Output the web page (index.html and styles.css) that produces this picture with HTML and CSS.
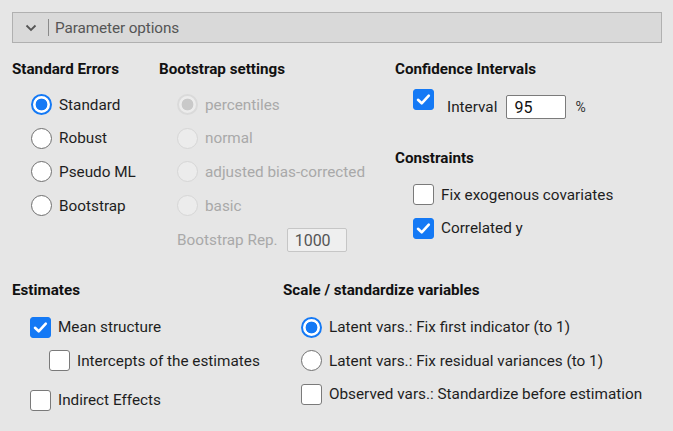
FILE: index.html
```html
<!DOCTYPE html>
<html>
<head>
<meta charset="utf-8">
<link rel="stylesheet" href="styles.css">
</head>
<body>
<div class="panel-header">
  <svg class="chev" width="12" height="8" viewBox="0 0 12 8"><path d="M1.5 1.5 L6 6 L10.5 1.5" fill="none" stroke="#555" stroke-width="1.8"/></svg>
  <span class="sep"></span>
  <span class="title">Parameter options</span>
</div>

<div class="section top">
  <div class="col col-se">
    <div class="heading">Standard Errors</div>
    <div class="opts">
      <div class="row"><span class="radio on"></span><span>Standard</span></div>
      <div class="row"><span class="radio"></span><span>Robust</span></div>
      <div class="row"><span class="radio"></span><span>Pseudo ML</span></div>
      <div class="row"><span class="radio"></span><span>Bootstrap</span></div>
    </div>
  </div>
  <div class="col col-bs">
    <div class="heading">Bootstrap settings</div>
    <div class="opts disabled">
      <div class="row"><span class="radio dis on"></span><span>percentiles</span></div>
      <div class="row"><span class="radio dis"></span><span>normal</span></div>
      <div class="row"><span class="radio dis"></span><span>adjusted bias-corrected</span></div>
      <div class="row"><span class="radio dis"></span><span>basic</span></div>
      <div class="rep-row"><span>Bootstrap Rep.</span><span class="field dis-field">1000</span></div>
    </div>
  </div>
  <div class="col col-ci">
    <div class="heading">Confidence Intervals</div>
    <div class="ci-row">
      <span class="check on"><svg width="21" height="21" viewBox="0 0 21 21"><path d="M5 10.8 L8.7 14.3 L15.8 6.6" fill="none" stroke="#fff" stroke-width="2.6" stroke-linecap="round" stroke-linejoin="round"/></svg></span>
      <div class="ci-inner"><span>Interval</span><span class="field">95</span><span class="pct">%</span></div>
    </div>
    <div class="heading h-constraints">Constraints</div>
    <div class="opts tight">
      <div class="row"><span class="check"></span><span>Fix exogenous covariates</span></div>
      <div class="row"><span class="check on"><svg width="21" height="21" viewBox="0 0 21 21"><path d="M5 10.8 L8.7 14.3 L15.8 6.6" fill="none" stroke="#fff" stroke-width="2.6" stroke-linecap="round" stroke-linejoin="round"/></svg></span><span>Correlated y</span></div>
    </div>
  </div>
</div>

<div class="section bottom">
  <div class="col col-est">
    <div class="heading">Estimates</div>
    <div class="opts tight">
      <div class="row"><span class="check on"><svg width="21" height="21" viewBox="0 0 21 21"><path d="M5 10.8 L8.7 14.3 L15.8 6.6" fill="none" stroke="#fff" stroke-width="2.6" stroke-linecap="round" stroke-linejoin="round"/></svg></span><span>Mean structure</span></div>
      <div class="row nested"><span class="check"></span><span>Intercepts of the estimates</span></div>
      <div class="row gap-top"><span class="check"></span><span>Indirect Effects</span></div>
    </div>
  </div>
  <div class="col col-scale">
    <div class="heading">Scale / standardize variables</div>
    <div class="opts tight">
      <div class="row"><span class="radio on"></span><span>Latent vars.: Fix first indicator (to 1)</span></div>
      <div class="row"><span class="radio"></span><span>Latent vars.: Fix residual variances (to 1)</span></div>
      <div class="row"><span class="check"></span><span>Observed vars.: Standardize before estimation</span></div>
    </div>
  </div>
</div>
</body>
</html>
```
FILE: styles.css
```css
html, body {
  margin: 0;
  padding: 0;
  background: #e6e6e6;
  font-family: Roboto, "Liberation Sans", sans-serif;
  color: #1e1e1e;
  width: 673px;
  height: 431px;
  overflow: hidden;
}

.panel-header {
  margin: 12px 11px 0 12px;
  height: 29px;
  border: 1px solid #b0b0b0;
  background: #d9d9d9;
  display: flex;
  align-items: center;
  box-sizing: content-box;
}
.chev {
  margin-left: 12px;
  margin-top: 1px;
}
.sep {
  width: 1px;
  height: 17px;
  background: #8a8a8a;
  margin-left: 11px;
}
.title {
  margin-left: 6px;
  font-size: 15.3px;
  color: #555;
  letter-spacing: -0.1px;
}

.section {
  display: flex;
  padding-left: 12px;
}
.top { margin-top: 16px; }
.bottom { margin-top: 28px; }

.heading {
  font-weight: bold;
  font-size: 15.2px;
  line-height: 20px;
  height: 20px;
  color: #111;
  white-space: nowrap;
}

.col-se { width: 147px; }
.col-bs { width: 236px; }
.col-est { width: 271px; }

.opts {
  margin-top: 9px;
  padding-left: 18px;
  font-size: 15.3px;
}
.opts.tight { margin-top: 10px; }
.col-se .opts { padding-left: 19px; }

.row {
  display: flex;
  align-items: center;
  height: 33.6px;
  gap: 7px;
  white-space: nowrap;
}
.row.nested { padding-left: 19px; }
.row.gap-top { margin-top: 6px; }

.disabled { color: #a9a9a9; }

.radio {
  width: 21px;
  height: 21px;
  box-sizing: border-box;
  border-radius: 50%;
  border: 1px solid #6f6f6f;
  background: #fff;
  flex: none;
}
.radio.on {
  border: 2px solid #1479f5;
  background: radial-gradient(circle, #1479f5 0 5.6px, #fff 6.2px);
}
.radio.dis {
  border: 1px solid #d6d6d6;
  background: #ececec;
}
.radio.dis.on {
  border: 2px solid #dadada;
  background: radial-gradient(circle, #c9c9c9 0 5.6px, #ececec 6.2px);
}

.check {
  width: 21px;
  height: 21px;
  box-sizing: border-box;
  border-radius: 3px;
  border: 1px solid #7a7a7a;
  background: #fff;
  flex: none;
  display: block;
}
.check.on {
  background: #1479f5;
  border-color: #1479f5;
}
.check.on svg {
  display: block;
  margin: -1px;
}

.rep-row {
  margin-top: 6px;
  display: flex;
  align-items: center;
  height: 24px;
  gap: 9px;
  white-space: nowrap;
}

.field {
  display: inline-flex;
  align-items: center;
  box-sizing: border-box;
  width: 60px;
  height: 24px;
  padding-left: 7px;
  border: 1px solid #7b7b7b;
  border-radius: 2px;
  background: #fff;
  font-size: 16px;
  color: #111;
}
.dis-field {
  background: #efefef;
  border-color: #c6c6c6;
  color: #555;
}

.ci-row {
  display: flex;
  align-items: flex-start;
  margin-top: 10px;
  padding-left: 18px;
  font-size: 15.3px;
}
.ci-inner {
  display: flex;
  align-items: center;
  height: 24px;
  margin-top: 6px;
  margin-left: 13px;
  gap: 9px;
}
.pct { font-size: 14px; color: #333; }

.h-constraints { margin-top: 29px; }
```
